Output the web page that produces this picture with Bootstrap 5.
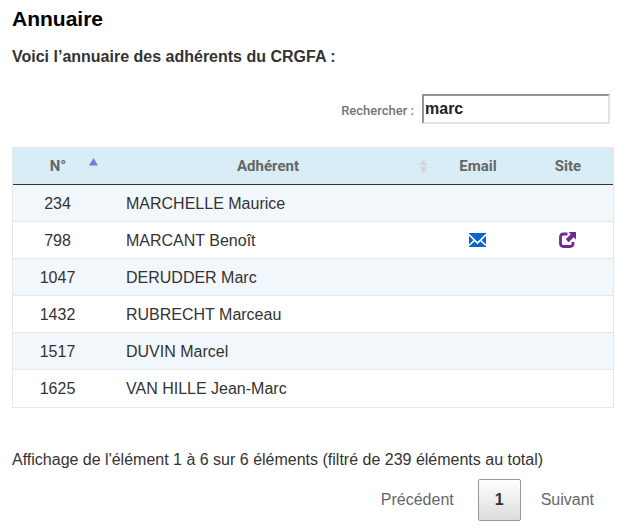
<!DOCTYPE html>
<html lang="fr">
<head>
<meta charset="utf-8">
<meta name="viewport" content="width=device-width, initial-scale=1">
<title>Annuaire</title>
<link href="https://cdn.jsdelivr.net/npm/bootstrap@5.3.0/dist/css/bootstrap.min.css" rel="stylesheet">
<style>
body { font-family: "Liberation Sans", Arial, sans-serif; font-size: 16px; line-height: 24px; color: #333; background: #fff; }
.page-area { padding: 7px 11px 4px 12px; }
h1 { font-size: 21px; line-height: 24px; color: #000; }
.intro { margin-top: 14px; margin-bottom: 25px; }
.search-row { padding-right: 4px; margin-bottom: 23px; gap: 8px; }
.search-row label { font: 500 13px/20px Roboto, sans-serif; color: #767676; padding-top: 3px; }
.search-row input { width: 188px; height: 30px; padding: 0 1px; border: 2px solid; border-color: #949494 #e3e3e3 #e3e3e3 #949494; font-weight: bold; color: #222; background: #fff; outline: 0; }
.directory { table-layout: fixed; border: 1px solid #e7e7e7; border-collapse: separate; border-spacing: 0; color: #333; }
.directory col.narrow { width: 90px; }
.directory > thead > tr > th { height: 37px; padding: 0 6px; background: #d9edf7; border-bottom: 1px solid #333; font: bold 15px/20px Roboto, sans-serif; color: #666; text-align: center; vertical-align: middle; }
.directory > tbody > tr > td { height: 37px; padding: 1px 23px 0; border-bottom: 1px solid #e7e7e7; background: #fff; vertical-align: middle; }
.directory > tbody > tr:nth-child(odd) > td { background: #f2f7fc; }
.directory > tbody > tr:last-child > td { border-bottom: 0; }
.directory > tbody > tr > td.mid { padding: 1px 1px 0 0; text-align: center; }
.directory svg { display: block; }
.directory a svg { margin: -2px auto 0; }
.head-cell { display: grid; grid-template-columns: 8px 1fr 8px; align-items: center; }
.sort { padding: 0; border: 0; background: none; grid-column: 3; }
.info { margin-top: 40px; margin-bottom: 7px; }
.pager { gap: 3px; padding-right: 3px; }
.pager button { height: 42px; padding: 0 16px; border: 1px solid transparent; border-radius: 2px; background: none; color: #666; }
.pager .current { border-color: #979797; background: linear-gradient(#fff, #dcdcdc); color: #333; font-weight: bold; margin-left: 4px; }
</style>
<script src="https://cdn.jsdelivr.net/npm/bootstrap@5.3.0/dist/js/bootstrap.bundle.min.js"></script>
</head>
<body>
<main class="page-area">
  <h1 class="fw-bold mb-0">Annuaire</h1>
  <p class="intro fw-bold">Voici l’annuaire des adhérents du CRGFA :</p>
  <div class="search-row d-flex justify-content-end align-items-center">
    <label for="search">Rechercher :</label>
    <input id="search" type="text" value="marc">
  </div>
  <table class="directory table mb-0 w-100">
    <colgroup><col class="narrow"><col><col class="narrow"><col class="narrow"></colgroup>
    <thead>
      <tr>
        <th scope="col"><div class="head-cell"><span></span><span>N°</span><button class="sort" type="button" aria-label="Trier par numéro"><svg width="9" height="20" viewBox="0 0 9 20"><path d="M4.500 2 9 9.500H0Z" fill="#7b7bdc"/></svg></button></div></th>
        <th scope="col"><div class="head-cell"><span></span><span>Adhérent</span><button class="sort" type="button" aria-label="Trier par adhérent"><svg width="9" height="20" viewBox="0 0 9 20"><path d="M4.500 3 8.500 9.500H.5ZM.5 11h8l-4 6.500Z" fill="#d5d5da"/></svg></button></div></th>
        <th scope="col">Email</th>
        <th scope="col">Site</th>
      </tr>
    </thead>
    <tbody>
      <tr><td class="mid">234</td><td>MARCHELLE Maurice</td><td></td><td></td></tr>
      <tr><td class="mid">798</td><td>MARCANT Benoît</td>
        <td class="mid"><a href="#" aria-label="Envoyer un email"><svg width="17" height="16" viewBox="0 0 17 16"><path d="M0 1h17v14H0Z" fill="#0a66cc"/><path d="M0 2.500 8.500 11 17 2.500M0 13.500 5.700 8.200M17 13.500 11.300 8.200" fill="none" stroke="#fff" stroke-width="1.600"/></svg></a></td>
        <td class="mid"><a href="#" aria-label="Ouvrir le site"><svg width="17" height="16" viewBox="0 0 17 16"><path d="M8.500 2H4.500Q1.500 2 1.500 5v6.500q0 3 3 3h6.500q3 0 3-3V10" fill="none" stroke="#702c91" stroke-width="2.800"/><path d="M9.500 0H17v7.500l-2.300-2.300-5 5-3-3 5-5Z" fill="#702c91"/></svg></a></td></tr>
      <tr><td class="mid">1047</td><td>DERUDDER Marc</td><td></td><td></td></tr>
      <tr><td class="mid">1432</td><td>RUBRECHT Marceau</td><td></td><td></td></tr>
      <tr><td class="mid">1517</td><td>DUVIN Marcel</td><td></td><td></td></tr>
      <tr><td class="mid">1625</td><td>VAN HILLE Jean-Marc</td><td></td><td></td></tr>
    </tbody>
  </table>
  <p class="info">Affichage de l'élément 1 à 6 sur 6 éléments (filtré de 239 éléments au total)</p>
  <nav class="pager d-flex justify-content-end align-items-center" aria-label="Pagination">
    <button type="button">Précédent</button>
    <button type="button" class="current" aria-current="page">1</button>
    <button type="button">Suivant</button>
  </nav>
</main>
</body>
</html>
